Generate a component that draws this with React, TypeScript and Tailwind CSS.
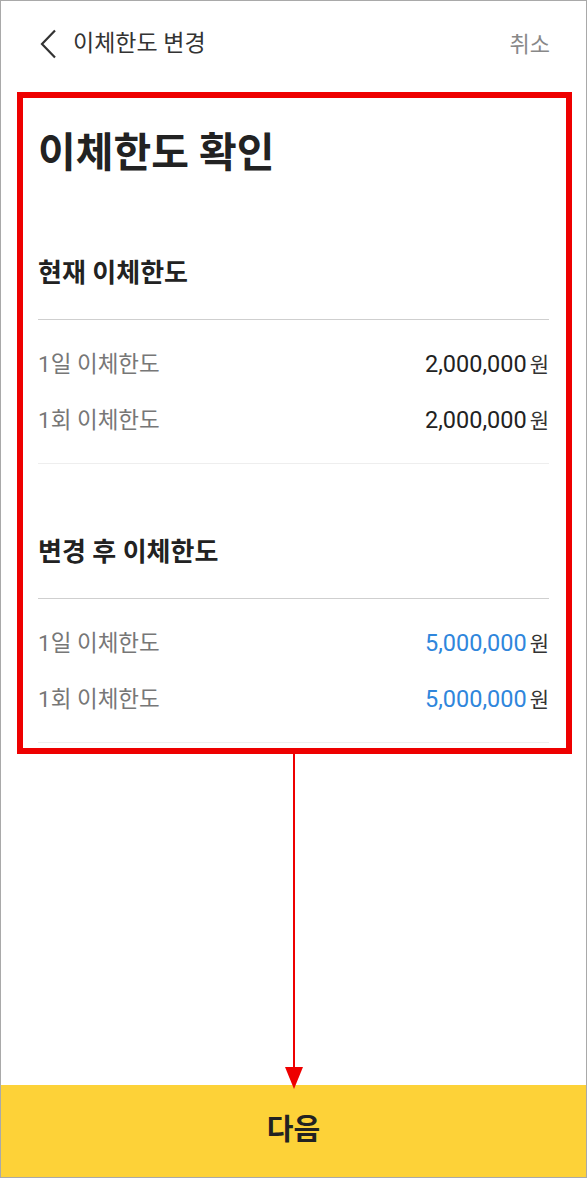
type Row = { label: string; amount: string };

const current: Row[] = [
  { label: "1일 이체한도", amount: "2,000,000" },
  { label: "1회 이체한도", amount: "2,000,000" },
];

const changed: Row[] = [
  { label: "1일 이체한도", amount: "5,000,000" },
  { label: "1회 이체한도", amount: "5,000,000" },
];

function LimitSection({
  title,
  rows,
  accent,
}: {
  title: string;
  rows: Row[];
  accent?: boolean;
}) {
  return (
    <div>
      <div className="text-[26px] leading-[30px] font-bold text-[#222]">{title}</div>
      <div className="mt-[31px] h-px bg-[#cfcfcf]" />
      <div className="pt-[17px] pb-[14px]">
        {rows.map((r) => (
          <div key={r.label} className="h-[56px] flex items-center justify-between">
            <span className="text-[22.5px] text-[#777]">{r.label}</span>
            <span className="flex items-baseline">
              <span
                className={
                  accent
                    ? "text-[23.5px] text-[#2f86dc]"
                    : "text-[23.5px] text-[#222]"
                }
              >
                {r.amount}
              </span>
              <span className="ml-[3px] text-[21px] text-[#333]">원</span>
            </span>
          </div>
        ))}
      </div>
      <div className="h-px bg-[#eeeeee]" />
    </div>
  );
}

export default function App() {
  return (
    <div
      className="relative w-[587px] h-[1178px] flex flex-col bg-white border border-[#a9a9a9] overflow-hidden"
      style={{ fontFamily: '"Roboto", "Noto Sans CJK KR", sans-serif' }}
    >
      {/* top bar */}
      <div className="h-[86px] shrink-0 flex items-center justify-between pl-[39px] pr-[36px]">
        <div className="flex items-center">
          <svg width="17" height="30" viewBox="0 0 17 30" fill="none">
            <path d="M15 1.5 L2 15 L15 28.5" stroke="#333" strokeWidth="2.2" />
          </svg>
          <span className="ml-[16px] text-[23px] text-[#333]">이체한도 변경</span>
        </div>
        <span className="text-[22px] text-[#888]">취소</span>
      </div>

      <div className="px-[37px]">
        <h1 className="mt-[41px] text-[41px] leading-[50px] font-bold text-[#222]">
          이체한도 확인
        </h1>
        <div className="mt-[80px]">
          <LimitSection title="현재 이체한도" rows={current} />
        </div>
        <div className="mt-[73px]">
          <LimitSection title="변경 후 이체한도" rows={changed} accent />
        </div>
      </div>

      <div className="flex-1" />

      <button className="h-[92px] shrink-0 bg-[#fdd238] text-[29px] font-bold text-[#222]">
        다음
      </button>

      {/* red callout box with arrow down to the button */}
      <div className="absolute left-[16px] top-[91px] w-[555px] h-[662px] border-[6px] border-[#ee0000] pointer-events-none" />
      <div className="absolute left-[292px] top-[752px] w-[2px] h-[320px] bg-[#ee0000]" />
      <svg
        className="absolute left-[284px] top-[1066px]"
        width="18"
        height="22"
        viewBox="0 0 18 22"
      >
        <polygon points="0,0 18,0 9,22" fill="#ee0000" />
      </svg>
    </div>
  );
}
